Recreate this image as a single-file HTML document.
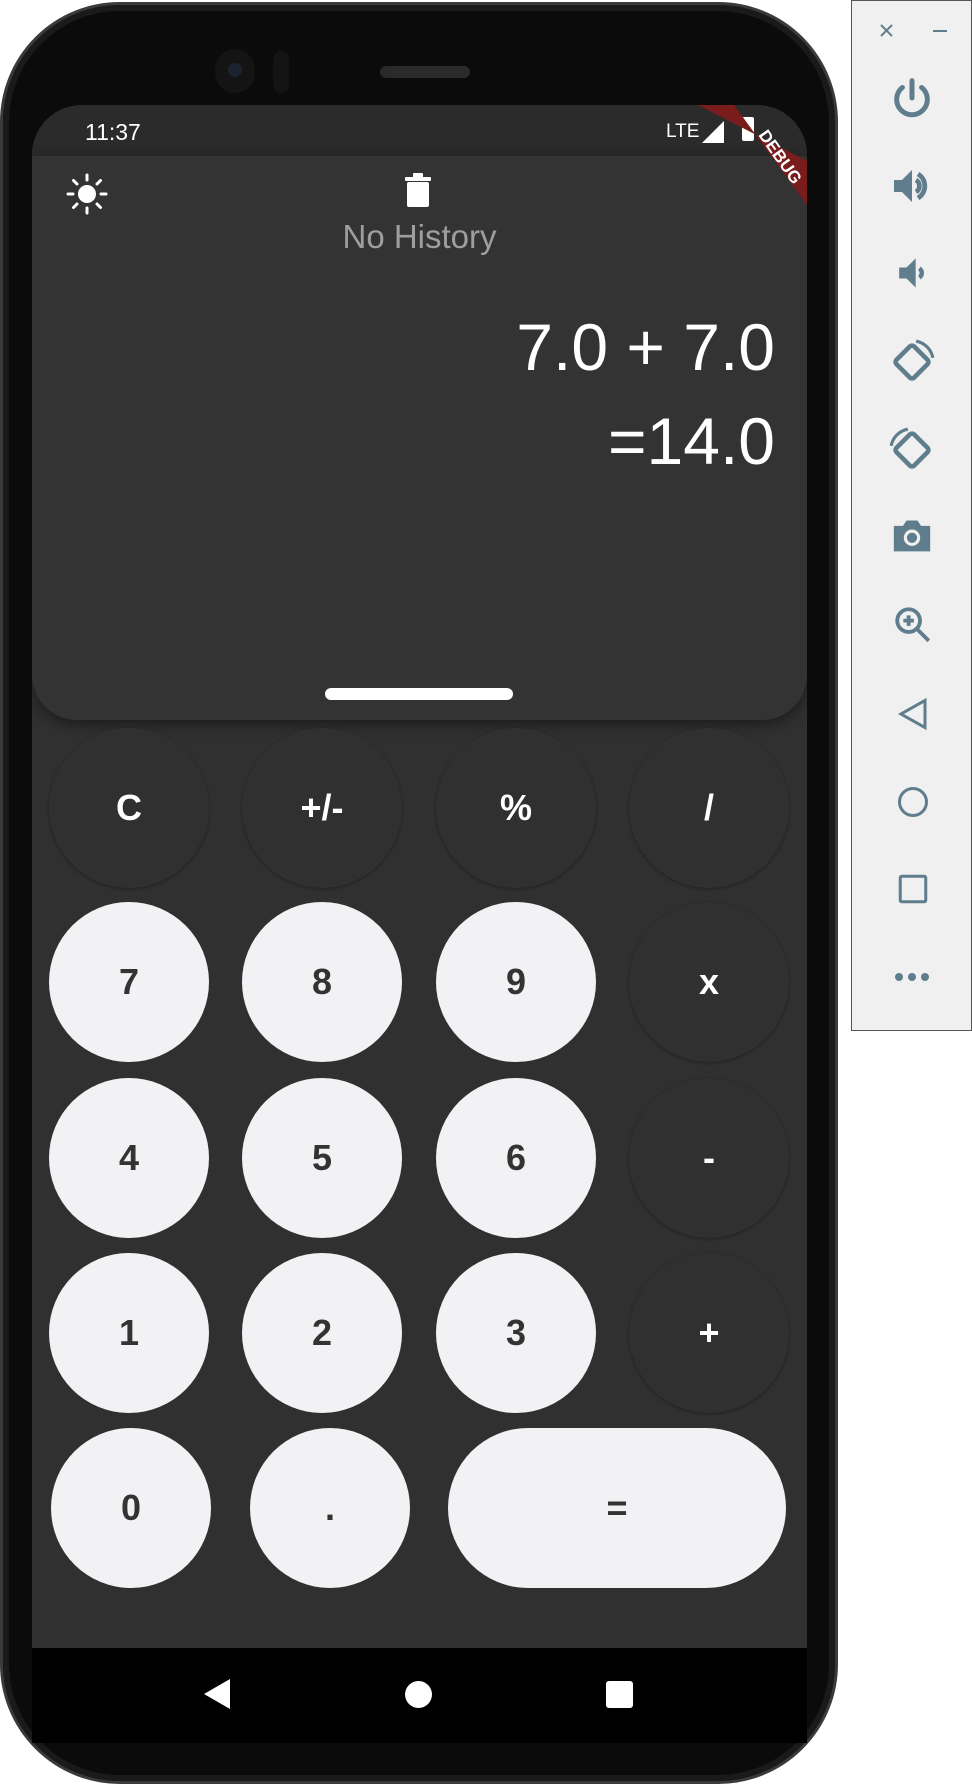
<!DOCTYPE html>
<html><head><meta charset="utf-8"><style>
*{margin:0;padding:0;box-sizing:border-box}
body{width:972px;height:1786px;background:#fff;position:relative;overflow:hidden;font-family:"Liberation Sans",sans-serif}
.phone{position:absolute;left:0;top:2px;width:838px;height:1782px;background:#0b0b0b;border-radius:120px;border:3px solid #3a3a3a;box-shadow:inset 0 0 0 6px #1a1a1a}
.screen{position:absolute;left:32px;top:105px;width:775px;height:1638px;background:#303030;border-radius:50px 50px 0 0;overflow:hidden}
.status{position:absolute;left:0;top:0;width:775px;height:51px;background:#2b2b2b}
.top{position:absolute;left:0;top:51px;width:775px;height:564px;background:#333;border-radius:0 0 45px 45px;box-shadow:0 4px 14px rgba(0,0,0,.45)}
.btn{position:absolute;width:160px;height:160px;border-radius:80px;display:flex;align-items:center;justify-content:center;font-weight:bold;font-size:36px}
.n{background:#f2f2f4;color:#333}
.o{background:#303030;color:#fff;box-shadow:0 1px 3px rgba(0,0,0,.35)}
.nav{position:absolute;left:0;top:1543px;width:775px;height:95px;background:#000}
.panel{position:absolute;left:851px;top:0;width:121px;height:1031px;background:#f0f0f0;border:1px solid #555}
.panel svg{position:absolute}
</style></head><body>
<div class="phone">
 <div style="position:absolute;left:212px;top:44px;width:40px;height:44px;border-radius:20px;background:#141414"></div>
 <div style="position:absolute;left:225px;top:58px;width:14px;height:14px;border-radius:7px;background:#1c2230"></div>
 <div style="position:absolute;left:270px;top:46px;width:16px;height:42px;border-radius:8px;background:#141414"></div>
 <div style="position:absolute;left:377px;top:61px;width:90px;height:12px;border-radius:6px;background:#2a2a2a"></div>
</div>
<div class="screen" style="left:32px">
 <div class="status"></div>
 <div style="position:absolute;left:53px;top:14px;color:#fff;font-size:23px">11:37</div>
 <div style="position:absolute;left:634px;top:16px;color:#fff;font-size:19px">LTE</div>
 <svg style="position:absolute;left:670px;top:16px" width="24" height="22"><path d="M22 0V22H0Z" fill="#fff"/></svg>
 <div style="position:absolute;left:710px;top:12px;width:12px;height:24px;background:#fff;border-radius:2px"></div>
 <div class="top">
  <svg style="position:absolute;left:33px;top:16px" width="44" height="44" viewBox="0 0 44 44"><circle cx="22" cy="22" r="9" fill="#fff"/><g stroke="#fff" stroke-width="3" stroke-linecap="round"><path d="M22 3v5M22 36v5M3 22h5M36 22h5M8.5 8.5l3.5 3.5M32 32l3.5 3.5M8.5 35.5l3.5-3.5M32 12l3.5-3.5"/></g></svg>
  <svg style="position:absolute;left:372px;top:16px" width="28" height="36" viewBox="0 0 28 36"><rect x="1" y="5" width="26" height="4" rx="1" fill="#fff"/><rect x="9" y="1" width="10" height="5" rx="1" fill="#fff"/><rect x="3" y="10" width="22" height="25" rx="2" fill="#fff"/></svg>
  <div style="position:absolute;left:0;width:775px;top:62px;text-align:center;color:#9e9e9e;font-size:33px">No History</div>
  <div style="position:absolute;right:32px;top:153px;color:#fff;font-size:66px">7.0 + 7.0</div>
  <div style="position:absolute;right:32px;top:247px;color:#fff;font-size:66px">=14.0</div>
  <div style="position:absolute;left:293px;top:532px;width:188px;height:12px;border-radius:6px;background:#fff"></div>
 </div>
 <svg style="position:absolute;left:630px;top:0" width="145" height="110"><path d="M36 0H72L145 100V56Z" fill="#7a1c1c"/><text x="0" y="0" transform="translate(96,30) rotate(55)" fill="#fff" font-size="17" font-weight="bold" font-family="Liberation Sans">DEBUG</text></svg>
</div>
<div class="btn o" style="left:49px;top:728px">C</div>
<div class="btn o" style="left:242px;top:728px">+/-</div>
<div class="btn o" style="left:436px;top:728px">%</div>
<div class="btn o" style="left:629px;top:728px">/</div>
<div class="btn n" style="left:49px;top:902px">7</div>
<div class="btn n" style="left:242px;top:902px">8</div>
<div class="btn n" style="left:436px;top:902px">9</div>
<div class="btn o" style="left:629px;top:902px">x</div>
<div class="btn n" style="left:49px;top:1078px">4</div>
<div class="btn n" style="left:242px;top:1078px">5</div>
<div class="btn n" style="left:436px;top:1078px">6</div>
<div class="btn o" style="left:629px;top:1078px">-</div>
<div class="btn n" style="left:49px;top:1253px">1</div>
<div class="btn n" style="left:242px;top:1253px">2</div>
<div class="btn n" style="left:436px;top:1253px">3</div>
<div class="btn o" style="left:629px;top:1253px">+</div>
<div class="btn n" style="left:51px;top:1428px">0</div>
<div class="btn n" style="left:250px;top:1428px">.</div>
<div class="btn n" style="left:448px;top:1428px;width:338px">=</div>
<div class="nav" style="left:32px;top:1648px"></div>
<svg style="position:absolute;left:202px;top:1678px" width="30" height="32"><path d="M28 1V31L2 16Z" fill="#fff"/></svg>
<div style="position:absolute;left:405px;top:1681px;width:27px;height:27px;border-radius:50%;background:#fff"></div>
<div style="position:absolute;left:606px;top:1681px;width:27px;height:27px;border-radius:3px;background:#fff"></div>
<div class="panel">
 <svg style="left:26px;top:20px" width="70" height="20"><path d="M3 4l11 11M14 4L3 15" stroke="#5f7d8c" stroke-width="2"/><path d="M55 10h14" stroke="#5f7d8c" stroke-width="2"/></svg>
 <svg style="left:37px;top:74px" width="46" height="46" viewBox="0 0 24 24"><path d="M12 3v9M7 6.5a8 8 0 1 0 10 0" fill="none" stroke="#5f7d8c" stroke-width="2.6" stroke-linecap="round"/></svg>
 <svg style="left:36px;top:161px" width="48" height="48" viewBox="0 0 24 24"><path d="M3 9v6h4l5 5V4L7 9z" fill="#5f7d8c"/><path d="M15 6a7 7 0 0 1 0 12M14 9a3.5 3.5 0 0 1 0 6" fill="none" stroke="#5f7d8c" stroke-width="2.4"/></svg>
 <svg style="left:38px;top:250px" width="44" height="44" viewBox="0 0 24 24"><path d="M5 9v6h4l5 5V4L9 9z" fill="#5f7d8c"/><path d="M16 9.5a3 3 0 0 1 0 5" fill="none" stroke="#5f7d8c" stroke-width="2.4"/></svg>
 <svg style="left:35px;top:336px" width="50" height="50" viewBox="0 0 24 24"><rect x="6" y="6" width="12" height="12" rx="1.5" transform="rotate(45 12 12)" fill="none" stroke="#5f7d8c" stroke-width="2.2"/><path d="M14 2a10 10 0 0 1 8 8" fill="none" stroke="#5f7d8c" stroke-width="1.5"/></svg>
 <svg style="left:35px;top:424px" width="50" height="50" viewBox="0 0 24 24"><rect x="6" y="6" width="12" height="12" rx="1.5" transform="rotate(45 12 12)" fill="none" stroke="#5f7d8c" stroke-width="2.2"/><path d="M2 10a10 10 0 0 1 8-8" fill="none" stroke="#5f7d8c" stroke-width="1.5"/></svg>
 <svg style="left:38px;top:514px" width="44" height="40" viewBox="0 0 24 22"><path d="M2 6h5l2-3h6l2 3h5v14H2z" fill="#5f7d8c"/><circle cx="12" cy="12.5" r="4.5" fill="#f0f0f0"/><circle cx="12" cy="12.5" r="2.8" fill="#5f7d8c"/></svg>
 <svg style="left:40px;top:603px" width="42" height="42" viewBox="0 0 24 24"><circle cx="9.5" cy="9.5" r="6.5" fill="none" stroke="#5f7d8c" stroke-width="2.2"/><path d="M14.5 14.5L21 21M9.5 6.5v6M6.5 9.5h6" stroke="#5f7d8c" stroke-width="2.2"/></svg>
 <svg style="left:43px;top:695px" width="36" height="36" viewBox="0 0 24 24"><path d="M20 3v18L4 12z" fill="none" stroke="#5f7d8c" stroke-width="2"/></svg>
 <svg style="left:43px;top:783px" width="36" height="36" viewBox="0 0 24 24"><circle cx="12" cy="12" r="9" fill="none" stroke="#5f7d8c" stroke-width="2"/></svg>
 <svg style="left:43px;top:870px" width="36" height="36" viewBox="0 0 24 24"><rect x="3.5" y="3.5" width="17" height="17" rx="1" fill="none" stroke="#5f7d8c" stroke-width="2"/></svg>
 <svg style="left:40px;top:966px" width="40" height="20"><circle cx="7" cy="10" r="4" fill="#5f7d8c"/><circle cx="20" cy="10" r="4" fill="#5f7d8c"/><circle cx="33" cy="10" r="4" fill="#5f7d8c"/></svg>
</div>
</body></html>
